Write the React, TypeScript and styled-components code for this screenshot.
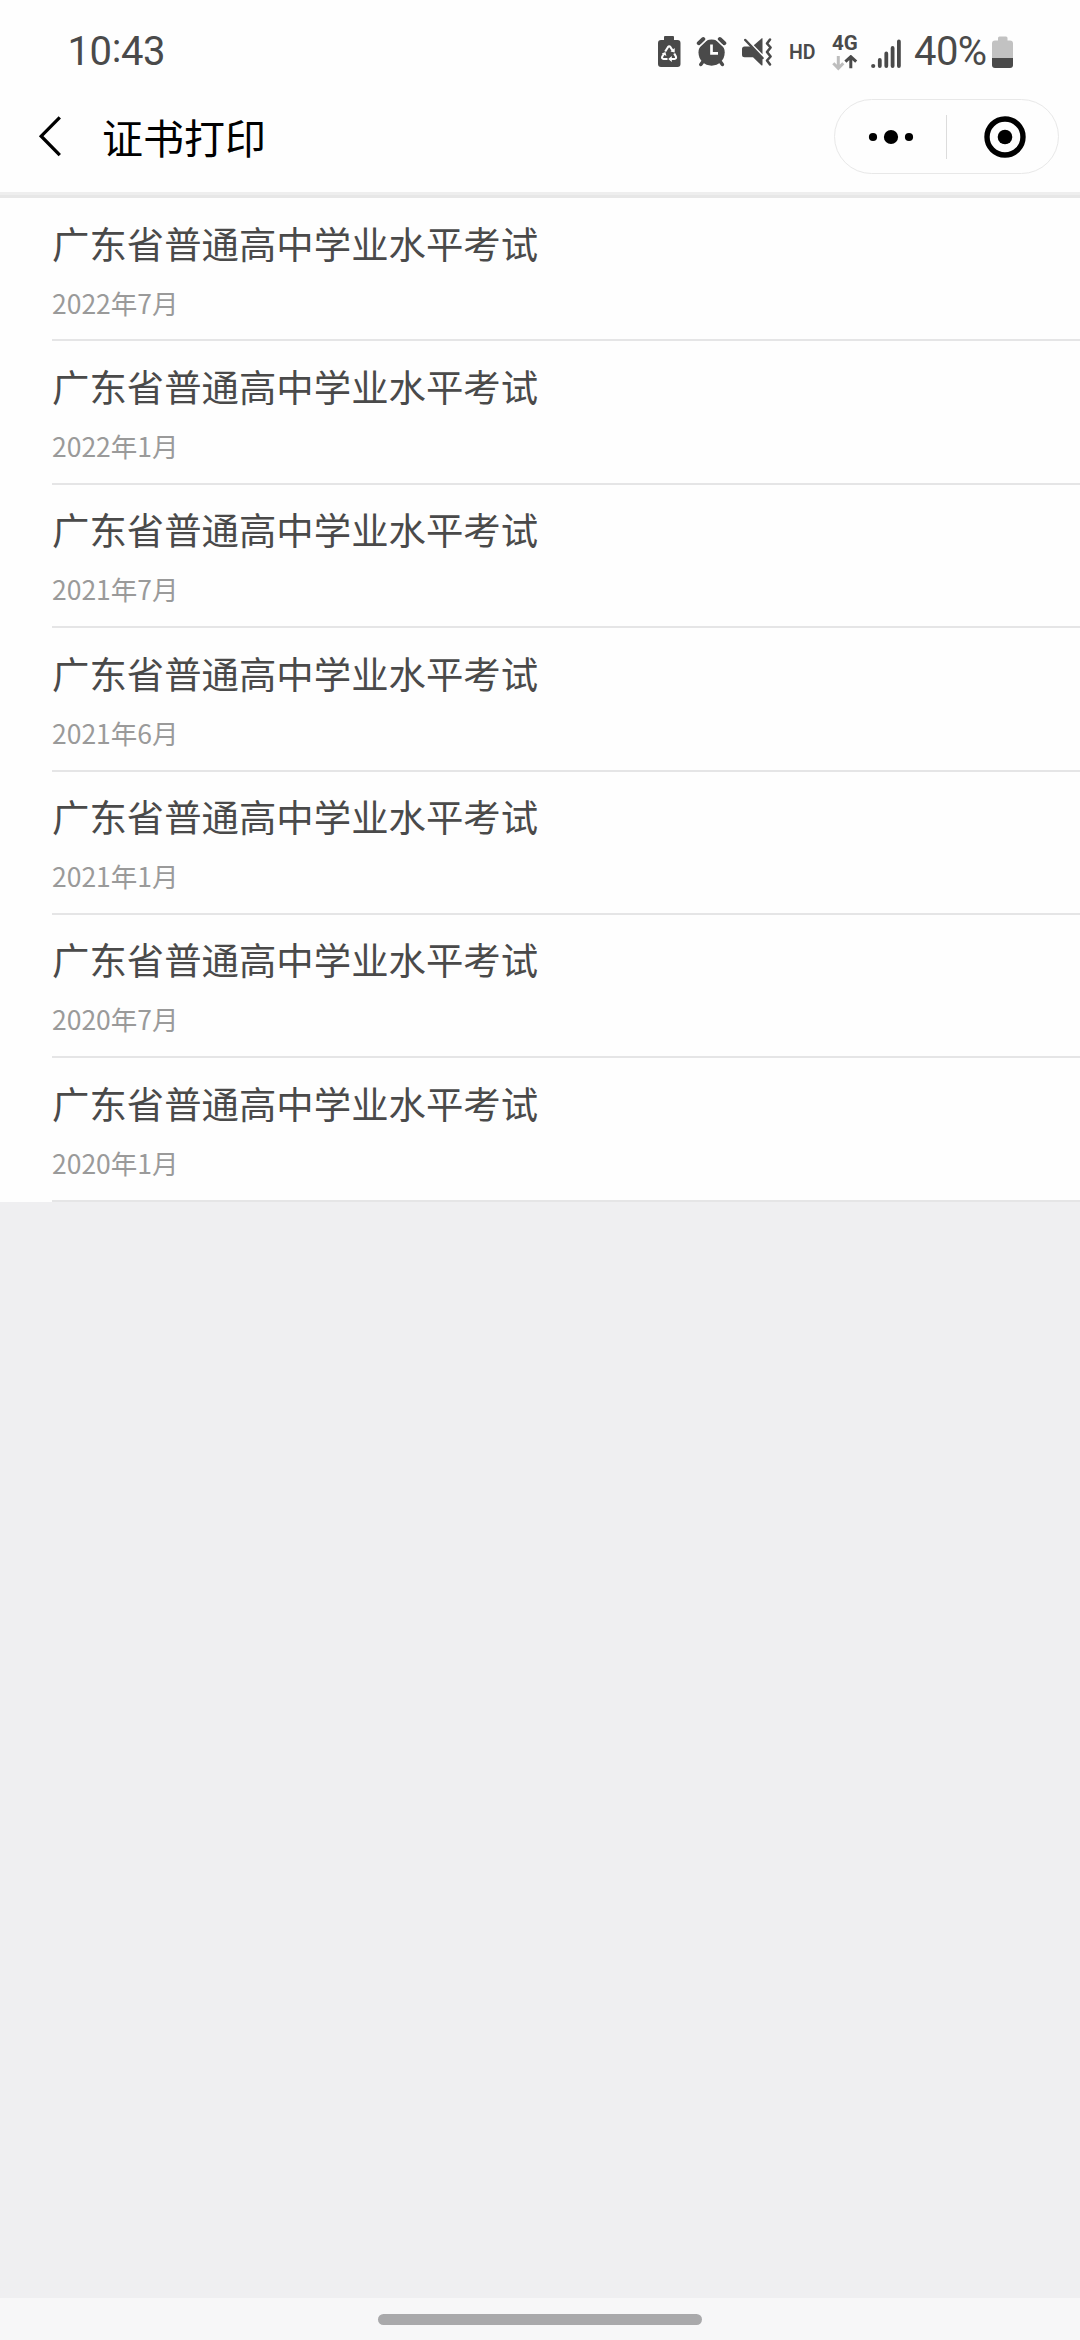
import React from "react";
import styled, { createGlobalStyle } from "styled-components";

const GlobalStyle = createGlobalStyle`
  *, *::before, *::after { box-sizing: border-box; }
  body { margin: 0; background: #efeff1; }
`;

const cjk = `"Noto Sans CJK SC", "Noto Sans", sans-serif`;
const ink = "#4a4a4a";

const Screen = styled.div`
  width: 1080px;
  height: 2340px;
  display: flex;
  flex-direction: column;
  background: #efeff1;
  font-family: ${cjk};
  overflow: hidden;
`;

const StatusBar = styled.div`
  height: 96px;
  flex: none;
  display: flex;
  align-items: flex-start;
  justify-content: space-between;
  padding: 32px 66px 0 67.5px;
  background: #fefefe;
  color: ${ink};
  font-family: Roboto, sans-serif;
`;

const Clock = styled.div`
  font-size: 40px;
  line-height: 40px;
  height: 40px;
  letter-spacing: -0.4px;
`;

const Colon = styled.span`
  position: relative;
  top: -3px;
`;

const StatusIcons = styled.div`
  display: flex;
  align-items: flex-start;
  height: 40px;
`;

const Glyph = styled.svg<{ $gap?: number }>`
  display: block;
  flex: none;
  height: 40px;
  margin-left: ${(p) => p.$gap ?? 0}px;
`;

const HdLabel = styled.span`
  width: 29px;
  margin-left: 15px;
  font-size: 19.5px;
  line-height: 41px;
  font-weight: 600;
`;

const Network = styled.div`
  width: 28px;
  height: 40px;
  margin-left: 14px;
  display: flex;
  flex-direction: column;
`;

const NetworkLabel = styled.span`
  font-size: 20.5px;
  line-height: 23px;
  height: 23px;
  font-weight: 700;
`;

const Percent = styled.span`
  width: 76px;
  margin-left: 12px;
  font-size: 40px;
  line-height: 40px;
  letter-spacing: -0.6px;
`;

const NavBar = styled.header`
  height: 96px;
  flex: none;
  display: flex;
  align-items: flex-start;
  padding: 3px 21px 0 36px;
  background: #fefefe;
`;

const BackButton = styled.button`
  width: 30px;
  height: 76px;
  padding: 0;
  border: 0;
  background: none;
  display: flex;
  align-items: center;
`;

const NavTitle = styled.h1`
  flex: 1;
  margin: 0 0 0 36px;
  font-size: 41px;
  font-weight: 400;
  line-height: 74px;
  color: #000;
`;

const Capsule = styled.div`
  width: 225px;
  height: 75px;
  flex: none;
  display: flex;
  align-items: center;
  border: 1px solid #e8e8e8;
  border-radius: 38px;
`;

const CapsuleButton = styled.button<{ $shift?: number }>`
  width: 111px;
  height: 73px;
  flex: none;
  padding: 0 0 0 ${(p) => p.$shift ?? 0}px;
  border: 0;
  background: none;
  display: flex;
  align-items: center;
  justify-content: center;
`;

const CapsuleDivider = styled.div`
  width: 1px;
  height: 44px;
  flex: none;
  background: #dcdcdc;
`;

const Rule = styled.div`
  height: 6px;
  flex: none;
  background: #e7e7e7;
  border-top: 3px solid #eeeeee;
`;

const List = styled.ul`
  flex: none;
  margin: 0;
  padding: 0 0 0 52px;
  list-style: none;
  background: #fefefe;
`;

const Row = styled.li`
  height: 143.4px;
  border-bottom: 2px solid #e5e5e6;
  padding-top: 16.5px;
`;

const RowTitle = styled.div`
  font-size: 37.4px;
  line-height: 56px;
  color: ${ink};
`;

const RowDate = styled.div`
  margin-top: 12px;
  font-size: 26.5px;
  line-height: 40px;
  color: #9a9a9a;
`;

const GestureArea = styled.footer`
  height: 42px;
  flex: none;
  margin-top: auto;
  padding-top: 16px;
  display: flex;
  justify-content: center;
  background: #f7f7f8;
`;

const GestureBar = styled.div`
  width: 324px;
  height: 11px;
  border-radius: 6px;
  background: #a9a9ab;
`;

const dates = ["2022年7月", "2022年1月", "2021年7月", "2021年6月", "2021年1月", "2020年7月", "2020年1月"];

const RecycleBattery = () => (
  <Glyph width="24" viewBox="657 32 24 40">
    <path
      fill={ink}
      d="M665 36h8q1 0 1 1v3h3.500q3 0 3 3v21q0 3-3 3h-16.500q-3 0-3-3v-21q0-3 3-3h3v-3q0-1 1-1z"
    />
    <g fill="none" stroke="#fefefe" strokeWidth="2.1" strokeLinejoin="round">
      <path d="M665.200 51.500l2.700-4.300q1.300-1.700 2.600 0l2 3.200" />
      <path d="M674.200 53.500l1.700 3q.7 2.200-1.500 2.500h-3.800" />
      <path d="M667.500 59h-3.800q-2.300-.4-1.400-2.500l1.700-2.700" />
    </g>
    <path fill="#fefefe" d="M670.500 51.500l4.200 1v-4.500zM671.800 56v6l-3.600-3zM661.800 53.600l3.600-1.700 1 4z" />
  </Glyph>
);

const Alarm = () => (
  <Glyph $gap={15} width="32" viewBox="696 32 32 40">
    <circle cx="711.600" cy="52.600" r="13.100" fill={ink} />
    <g fill="none" stroke={ink} strokeLinecap="round">
      <path strokeWidth="4" d="M698.800 43.200l4.500-4.200M724.300 43.200l-4.500-4.200" />
      <path strokeWidth="3.500" d="M703 61.500l-2.200 3M720.200 61.500l2.200 3" />
    </g>
    <path
      fill="none"
      stroke="#fefefe"
      strokeWidth="1.400"
      d="M697.500 48.600l9.500-9M725.700 48.600l-9.500-9"
    />
    <path fill="none" stroke="#fefefe" strokeWidth="2.700" d="M711.500 44.500v8.800h6.500" />
  </Glyph>
);

const MuteVibrate = () => (
  <Glyph $gap={13} width="33" viewBox="741 32 33 40">
    <path fill={ink} d="M744.500 46.500h6l12 12.300v6q0 1.200-1.200.4l-8.300-8h-8.500q-2.500 0-2.500-2.500v-5.700q0-2.500 2.500-2.500z" />
    <path fill={ink} d="M753.800 45.200l7.700-6.800q1-.8 1 .6v15.200z" />
    <path stroke={ink} strokeWidth="2.500" strokeLinecap="round" d="M745.300 40l17.200 18" />
    <path
      fill="none"
      stroke={ink}
      strokeWidth="2.600"
      strokeLinecap="round"
      strokeLinejoin="round"
      d="M770 39.500l-3 4 3.600 4-3.600 4.500 3.600 4.500-3.600 4 3 4"
    />
  </Glyph>
);

const Signal = () => (
  <Glyph $gap={10} width="32" viewBox="870 32 32 40">
    <circle cx="873.200" cy="66" r="2.100" fill={ink} />
    <g stroke={ink} strokeWidth="3.800" strokeLinecap="round">
      <path d="M879.800 60v6.100M886.300 53.500v12.600M892.600 48v18.100M898.900 41.500v24.600" />
    </g>
  </Glyph>
);

const Battery = () => (
  <Glyph $gap={2} width="22" viewBox="992 32 22 40">
    <path fill="#c2c2c2" d="M999.500 36.500h6.500q1.500 0 1.500 1.500v2.500h2.500q3 0 3 3v14.500h-21v-14.500q0-3 3-3h3v-2.500q0-1.500 1.500-1.500z" />
    <path fill={ink} d="M992 58h21v7q0 3-3 3h-15q-3 0-3-3z" />
  </Glyph>
);

export default function App() {
  return (
    <Screen>
      <GlobalStyle />
      <StatusBar>
        <Clock>
          10<Colon>:</Colon>43
        </Clock>
        <StatusIcons>
          <RecycleBattery />
          <Alarm />
          <MuteVibrate />
          <HdLabel>HD</HdLabel>
          <Network>
            <NetworkLabel>4G</NetworkLabel>
            <svg width="28" height="17" viewBox="832 55 28 17" fill="none" strokeWidth="3">
              <path stroke="#bdbdbd" d="M838.300 56v12M833.300 63.300l5 5 5-5" />
              <path stroke={ink} d="M850.800 68.200v-12M845.400 61.700l5.400-5 5.400 5" />
            </svg>
          </Network>
          <Signal />
          <Percent>40%</Percent>
          <Battery />
        </StatusIcons>
      </StatusBar>
      <NavBar>
        <BackButton aria-label="返回">
          <svg width="30" height="76" viewBox="36 99 30 76" fill="none">
            <path d="M59.800 117.300L41.200 136.200L59.800 155.200" stroke="#000" strokeWidth="3.300" />
          </svg>
        </BackButton>
        <NavTitle>证书打印</NavTitle>
        <Capsule>
          <CapsuleButton aria-label="更多">
            <svg width="46" height="16" viewBox="0 0 46 16">
              <circle cx="5" cy="8" r="4.100" />
              <circle cx="23" cy="8" r="7.100" />
              <circle cx="41" cy="8" r="4.100" />
            </svg>
          </CapsuleButton>
          <CapsuleDivider />
          <CapsuleButton $shift={4} aria-label="关闭">
            <svg width="42" height="42" viewBox="0 0 42 42">
              <circle cx="21" cy="21" r="18" fill="none" stroke="#000" strokeWidth="5.400" />
              <circle cx="21" cy="21" r="7.300" />
            </svg>
          </CapsuleButton>
        </Capsule>
      </NavBar>
      <Rule />
      <List>
        {dates.map((date) => (
          <Row key={date}>
            <RowTitle>广东省普通高中学业水平考试</RowTitle>
            <RowDate>{date}</RowDate>
          </Row>
        ))}
      </List>
      <GestureArea>
        <GestureBar />
      </GestureArea>
    </Screen>
  );
}
